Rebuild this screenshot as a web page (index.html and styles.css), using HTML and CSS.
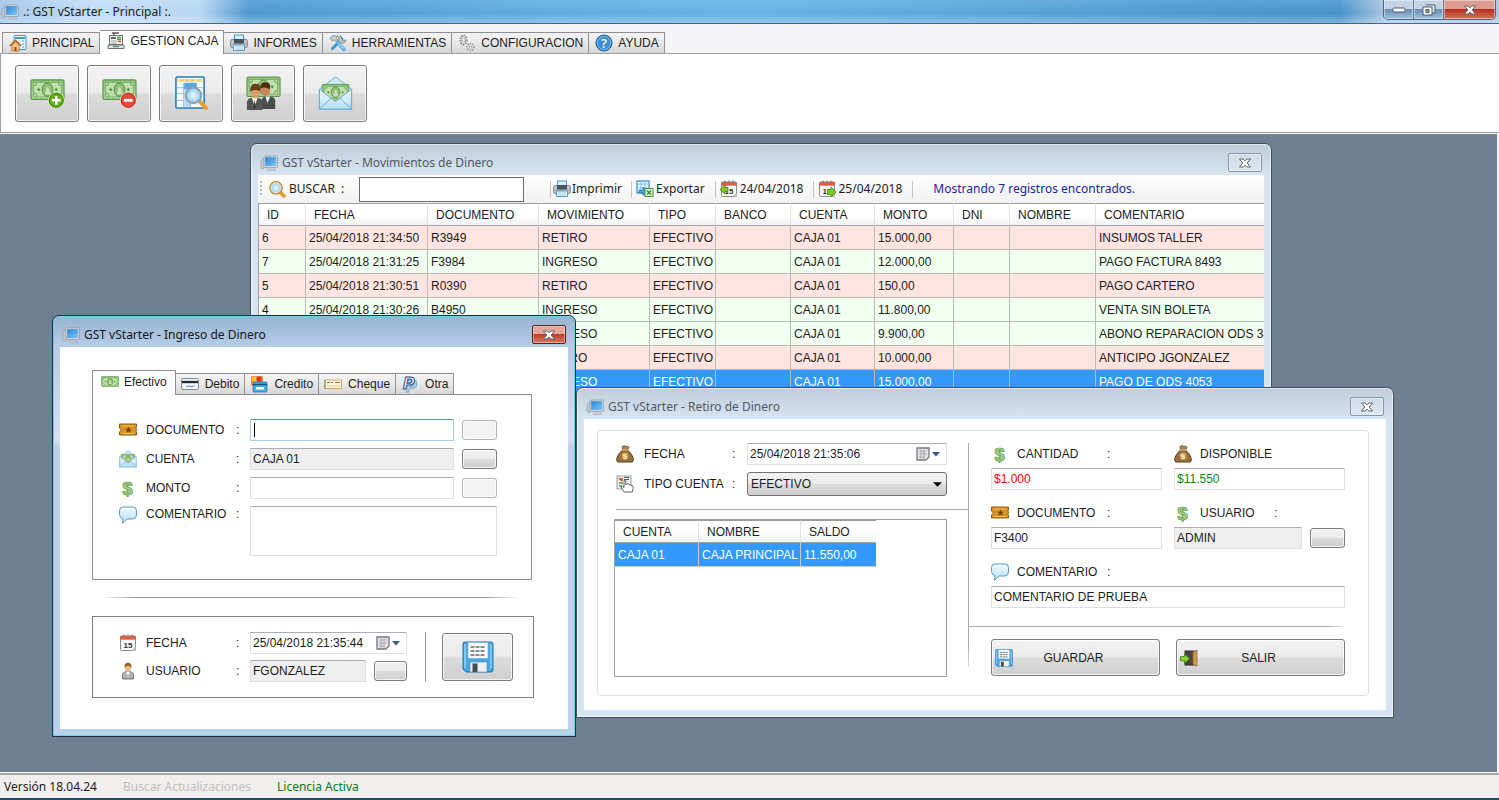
FILE: index.html
```html
<!DOCTYPE html>
<html lang="es">
<head>
<meta charset="utf-8">
<title>.: GST vStarter - Principal :.</title>
<meta name="viewport" content="width=device-width, initial-scale=1">
<link rel="stylesheet" href="styles.css">
</head>
<body>
<svg class="sprite" aria-hidden="true">
  <defs>
    <linearGradient id="g-screen" x1="0" y1="0" x2="1" y2="1"><stop offset="0" stop-color="#2b86d8"/><stop offset="1" stop-color="#7cc6f7"/></linearGradient>
    <linearGradient id="g-note" x1="0" y1="0" x2="0" y2="1"><stop offset="0" stop-color="#8fc07c"/><stop offset="1" stop-color="#b9dca6"/></linearGradient>
    <linearGradient id="g-env" x1="0" y1="0" x2="0" y2="1"><stop offset="0" stop-color="#f2faff"/><stop offset="1" stop-color="#b5ddf5"/></linearGradient>
    <radialGradient id="g-lens"><stop offset="0" stop-color="#eefaff"/><stop offset="1" stop-color="#86c7ef"/></radialGradient>
    <symbol id="i-monitor" viewBox="0 0 18 16"><path d="M1 5l3-2v10l-2 1-1-1z" fill="#c9ced3" stroke="#8c9399" stroke-width=".6"/><path d="M8 14h7l1 1.4H7z" fill="#d6dade" stroke="#9aa0a6" stroke-width=".5"/><rect x="4" y="1" width="13.500" height="11.500" rx="1" fill="#d4d8dc" stroke="#868d94" stroke-width=".6"/><rect x="5.200" y="2.200" width="11" height="8.800" fill="url(#g-screen)"/></symbol>
    <symbol id="i-home" viewBox="0 0 18 18"><rect x="5" y="1.500" width="12" height="14" rx="1" fill="#e9f6fd" stroke="#3d96d0"/><path d="M6 4h10" stroke="#3d96d0" stroke-width="2"/><path d="M13 7h2M13 10h2M13 13h2" stroke="#79bde4" stroke-width="1.500"/><path d="M3 11v6h7v-6L6.500 8z" fill="#f5c98c" stroke="#a8651e" stroke-width=".8"/><path d="M.8 12L6.500 6.500 12.200 12" fill="none" stroke="#b4641c" stroke-width="1.700"/><path d="M5.500 17v-4h2v4z" fill="#8a4b14"/></symbol>
    <symbol id="i-register" viewBox="0 0 18 18"><path d="M5 1h7M7 1v3" stroke="#555" stroke-width="1.300"/><rect x="2.500" y="3.500" width="13" height="9" fill="#f6f7f5" stroke="#6a716b"/><path d="M4 6h5" stroke="#333" stroke-width="1.500"/><path d="M10 5.500h4M10 7.500h4" stroke="#38a048" stroke-width="1.400"/><path d="M4 9h6M4 11h6" stroke="#9ba29b"/><path d="M11 9.500h3" stroke="#d33f32" stroke-width="1.300"/><path d="M1 13h16v3.500H1z" fill="#dfe4df" stroke="#69756b"/><path d="M6 14.700h6" stroke="#3d8c4c"/></symbol>
    <symbol id="i-printer" viewBox="0 0 18 18"><rect x="4.500" y="1" width="9" height="6" fill="#d4efff" stroke="#4a9bc9"/><rect x=".7" y="5.500" width="16.600" height="8" rx="1.500" fill="#c8cbce" stroke="#7d848a"/><path d="M1.500 10h15" stroke="#93999e"/><rect x="4" y="5" width="10" height="4.500" fill="#4c5259"/><path d="M3.500 11h11v5.500h-11z" fill="#f3faff" stroke="#4c9cc8"/><path d="M5 13h8M5 15h8" stroke="#9bc9e2"/></symbol>
    <symbol id="i-tools" viewBox="0 0 18 18"><path d="M3.500 14.500L13 5" stroke="#3a96d6" stroke-width="3" stroke-linecap="round"/><path d="M12 1.500a4 4 0 105 4.500l-2.800.5-1.500-1.700z" fill="#b9c0c5" stroke="#727a80" stroke-width=".7"/><path d="M1 4l3-2.500 5 .5-2 2 2 2-2 2-2-2-2 1z" fill="#c5cacd" stroke="#7a8186" stroke-width=".7"/><path d="M9.500 9.500l5.500 6" stroke="#5db4e9" stroke-width="3.600" stroke-linecap="round"/><path d="M10 9.500l4.500 5" stroke="#cdebfb"/></symbol>
    <symbol id="i-gears" viewBox="0 0 18 18"><ellipse cx="5.500" cy="6" rx="3" ry="4.500" fill="#eee" stroke="#888" stroke-width="2" stroke-dasharray="1.500 1"/><ellipse cx="5.500" cy="6" rx="1.300" ry="2.300" fill="#fff" stroke="#999" stroke-width=".7"/><circle cx="12.500" cy="13" r="3.300" fill="#eee" stroke="#999" stroke-width="2" stroke-dasharray="1.300 1.100"/><circle cx="12.500" cy="13" r="1.300" fill="#fff" stroke="#888" stroke-width=".7"/></symbol>
    <symbol id="i-help" viewBox="0 0 18 18"><circle cx="9" cy="9" r="8" fill="#3b8fce" stroke="#1c6199"/><circle cx="9" cy="9" r="6.600" fill="none" stroke="#9fd0f1" stroke-width=".7"/><text x="9" y="13.500" text-anchor="middle" font-family="Open Sans, sans-serif" font-size="13" font-weight="600" fill="#fff">?</text></symbol>
    <symbol id="i-note" viewBox="0 0 36 24"><rect x="1" y="1" width="34" height="20" rx="1.500" fill="url(#g-note)" stroke="#579747" stroke-width="1.200"/><rect x="3.500" y="3.500" width="29" height="15" fill="#bfe0ac" stroke="#79b166"/><path d="M4 7q3 0 3-3M32 7q-3 0-3-3M4 15q3 0 3 3M32 15q-3 0-3 3" fill="none" stroke="#69a356"/><ellipse cx="18" cy="11" rx="5.500" ry="7" fill="#90bd78" stroke="#58903f"/><path d="M15.500 16c0-4 1-3 1.500-5-1.500-4 3.500-4 2.500 0 0 2 2 1 2 5z" fill="#c8e2b8"/><circle cx="9" cy="11" r="1.300" fill="#4f8b3b"/><circle cx="27" cy="11" r="1.300" fill="#4f8b3b"/></symbol>
    <symbol id="i-addcash" viewBox="0 0 36 36"><use href="#i-note" width="36" height="24" y="3"/><circle cx="27" cy="25" r="8" fill="#63ad16" stroke="#d8f0bd" stroke-width="1"/><circle cx="27" cy="25" r="7.200" fill="none" stroke="#367908"/><path d="M27 20.500v9M22.500 25h9" stroke="#fff" stroke-width="2.600"/></symbol>
    <symbol id="i-subcash" viewBox="0 0 36 36"><use href="#i-note" width="36" height="24" y="3"/><circle cx="27" cy="25" r="8" fill="#e74b3d" stroke="#ffd7d0"/><circle cx="27" cy="25" r="7.200" fill="none" stroke="#b52318"/><path d="M22.500 25h9" stroke="#fff" stroke-width="2.800"/></symbol>
    <symbol id="i-search-table" viewBox="0 0 36 36"><rect x="2" y="1" width="29" height="32" rx="1" fill="#f5fbff" stroke="#207db8" stroke-width="1.600"/><path d="M3 4.500h27" stroke="#f0c75a" stroke-width="2.500"/><path d="M4 4.500h26" stroke="#fff" stroke-width="2.500" stroke-dasharray="1 5"/><path d="M3 12h27M3 18h27M3 25h27" stroke="#8fc2e5"/><path d="M10 7v25M17 7v25" stroke="#83bce0"/><rect x="10.500" y="7" width="13" height="7" fill="#5ca8de"/><rect x="10.500" y="14" width="6" height="18" fill="#b5daf2"/><path d="M26 26l7 7" stroke="#ef9f2c" stroke-width="4" stroke-linecap="round"/><circle cx="20" cy="20" r="8" fill="url(#g-lens)" stroke="#919ba3" stroke-width="1.800"/></symbol>
    <symbol id="i-people" viewBox="0 0 36 36"><use href="#i-note" width="36" height="24"/><path d="M16 34V25q0-4 7-4t7 4v9z" fill="#4b4b4d"/><path d="M20 21l2 7 3-7z" fill="#eee"/><ellipse cx="20" cy="14" rx="5" ry="6.500" fill="#c88656"/><path d="M14.500 13q0-7 6-6.500 6 .5 4 7-5-3-10-.5z" fill="#523015"/><path d="M1 35v-8q0-5 8-5t8 5v8z" fill="#555558"/><path d="M6 22l3 9 3-9z" fill="#fff"/><path d="M9 24l1 8-1 2-1-2z" fill="#333"/><ellipse cx="9.500" cy="16.500" rx="4.500" ry="6.500" fill="#d99c6e"/><path d="M4.500 16q-1-8 5.500-8 6 0 4.500 8-4-3-10 0z" fill="#6a3e1a"/></symbol>
    <symbol id="i-envelope" viewBox="0 0 36 37"><path d="M1 14L18 1l17 13v21H1z" fill="#cdeafb" stroke="#64acd5"/><use href="#i-note" width="30" height="20" x="3" y="8"/><path d="M1 14l17 13 17-13v21H1z" fill="url(#g-env)" stroke="#64acd5"/><path d="M1 35l13-12M35 35L22 23" fill="none" stroke="#64acd5"/></symbol>
    <symbol id="i-search" viewBox="0 0 18 18"><path d="M12 12l4 4" stroke="#e9982b" stroke-width="3.500" stroke-linecap="round"/><circle cx="8" cy="7.800" r="6" fill="url(#g-lens)" stroke="#c09139" stroke-width="1.800"/><circle cx="8" cy="7.800" r="5" fill="none" stroke="#fff" stroke-width=".7"/></symbol>
    <symbol id="i-export" viewBox="0 0 18 18"><rect x="1" y="1" width="12" height="12" fill="#eefaff" stroke="#3388be" stroke-width="1.200"/><path d="M1 4h12M1 8h12M5 1v12M9 1v12" stroke="#80bddf"/><path d="M3 10h4V7l5 4.500-5 4V13H3z" fill="#37a1e3" stroke="#1a6ca7" stroke-width=".6"/><rect x="9" y="8.500" width="8" height="8" fill="#e6f4dd" stroke="#3f953c"/><path d="M11 10.500l4 4M15 10.500l-4 4" stroke="#2f8f2f" stroke-width="1.500"/></symbol>
    <symbol id="i-cal" viewBox="0 0 18 18"><rect x="1.500" y="2" width="15" height="14.500" rx="1" fill="#fafafa" stroke="#888"/><rect x="1.500" y="2" width="15" height="3.700" fill="#e75b43"/><path d="M5 .5v3M9 .5v3M13 .5v3" stroke="#777" stroke-width="1.200"/><text x="9" y="13.500" text-anchor="middle" font-family="Liberation Sans, sans-serif" font-size="8" font-weight="700" fill="#333">15</text><path d="M12 16.500l4.500-4v4z" fill="#c8c8c8"/></symbol>
    <symbol id="i-calprev" viewBox="0 0 18 18"><use href="#i-cal" width="18" height="18"/><path d="M0 9.500L5 5v2.500h3v4H5V14z" fill="#82c91e" stroke="#3f8108" stroke-width=".8"/></symbol>
    <symbol id="i-calnext" viewBox="0 0 18 18"><use href="#i-cal" width="18" height="18"/><path d="M18 12l-5-5v2.500H9.500v5H13V17z" fill="#82c91e" stroke="#3f8108" stroke-width=".8"/></symbol>
    <symbol id="i-card" viewBox="0 0 18 18"><rect x=".6" y="3.500" width="16.800" height="11" rx="1.200" fill="#f8f9fb" stroke="#80868e"/><path d="M1 7h16" stroke="#292c32" stroke-width="2.400"/><path d="M5 11.500l3-.5 2 .5 4-.5" fill="none" stroke="#5b7fc5"/></symbol>
    <symbol id="i-credit" viewBox="0 0 18 18"><rect x="1" y="1" width="12" height="10" rx="1" fill="#ef8a45"/><circle cx="4.500" cy="4" r="2.600" fill="#ffc72b"/><circle cx="9" cy="4" r="2.600" fill="#d93025"/><rect x="3" y="7" width="14" height="10" rx="1" fill="#48aee8" stroke="#146099" stroke-width=".6"/><path d="M3 9.500h14" stroke="#14568f" stroke-width="1.500"/><rect x="6" y="12" width="8" height="2.500" fill="#fff"/></symbol>
    <symbol id="i-cheque" viewBox="0 0 18 18"><rect x=".6" y="5" width="16.800" height="8.500" fill="#fff9dc" stroke="#d6a568"/><path d="M1 5v9" stroke="#79a879" stroke-width="1.400"/><path d="M3 7.500h3M7 7.500h2M11 7.500h5" stroke="#777"/><path d="M3 11h13" stroke="#e0b7a0"/></symbol>
    <symbol id="i-paypal" viewBox="0 0 18 18"><text x="5" y="16.500" font-family="Liberation Sans, sans-serif" font-size="16" font-weight="700" font-style="italic" fill="#cfe0f1" stroke="#7ba6d2">P</text><text x="2" y="14" font-family="Liberation Sans, sans-serif" font-size="17" font-weight="700" font-style="italic" fill="#fff" stroke="#234a8c">P</text></symbol>
    <symbol id="i-ticket" viewBox="0 0 18 18"><path d="M.5 3h17v3l-1 1 1 1v1l-1 1 1 1v3H.5v-3l2-2-2-2z" fill="#d99322" stroke="#8e5a0c"/><path d="M3 5h12M3 12.500h12" stroke="#f0bd5c"/><path d="M9.500 5.500l1 2.300h2.400l-1.900 1.500.7 2.500-2.200-1.400-2.200 1.400.7-2.500-1.900-1.500h2.400z" fill="#6f460a"/></symbol>
    <symbol id="i-dollar" viewBox="0 0 18 18"><text x="8.500" y="15.500" text-anchor="middle" font-family="Liberation Sans, sans-serif" font-size="19" font-weight="700" fill="#a4d385" stroke="#5c9c45" stroke-width=".7">$</text></symbol>
    <symbol id="i-bubble" viewBox="0 0 18 18"><path d="M4 1h10q3.500 0 3.500 3.500v4.500q0 4-4 4H8l-4.500 4.500 .5-5Q.5 12 .5 8.500V4.500Q.5 1 4 1z" fill="url(#g-env)" stroke="#5b9ac9"/></symbol>
    <symbol id="i-user" viewBox="0 0 18 18"><path d="M3.500 17v-4q0-3.500 5.500-3.500t5.500 3.500v4z" fill="#aeb0b2" stroke="#737679"/><path d="M7 10l2 3.500 2-3.500z" fill="#fff"/><ellipse cx="9" cy="6" rx="3" ry="4" fill="#ebb98c"/><path d="M5.500 6Q5 .8 9 .8T12.500 6Q11 3.500 9 4 7 3.500 5.500 6z" fill="#9b642c"/></symbol>
    <symbol id="i-floppy" viewBox="0 0 32 32"><path d="M1 3q0-2 2-2h26q2 0 2 2v26q0 2-2 2H4l-3-3z" fill="#47a8e5" stroke="#1c73ae"/><path d="M3 3v24M29 3v24" stroke="#93d2f6" stroke-width="1.500"/><rect x="6" y="1.500" width="20" height="16" fill="#fbfdff" stroke="#79a9c9" stroke-width=".7"/><path d="M8.500 6h15M8.500 10h15M8.500 14h15" stroke="#666" stroke-width="1.600" stroke-dasharray="4 1"/><rect x="8" y="21" width="17" height="10" fill="#eef2f6" stroke="#6b91ad" stroke-width=".7"/><rect x="10.500" y="22.500" width="5" height="8.500" fill="#454b55"/></symbol>
    <symbol id="i-bag" viewBox="0 0 18 18"><path d="M6.500 5h5q5 4 6 9.500l-1 2.500h-15L.5 14.500Q1.500 9 6.500 5z" fill="#9a7041" stroke="#5d3e1a"/><path d="M6 1.500l2.500-1 1 1 2-.5 1.500 1.500L11.500 5h-5z" fill="#ad824d" stroke="#5d3e1a" stroke-width=".7"/><path d="M6 5h6" stroke="#e0be78" stroke-width="1.300"/><circle cx="9" cy="11" r="3.400" fill="#c69b55"/><text x="9" y="14" text-anchor="middle" font-family="Liberation Sans, sans-serif" font-size="8" font-weight="700" fill="#fff1bd">$</text></symbol>
    <symbol id="i-click" viewBox="0 0 18 18"><rect x="1" y="1" width="14" height="13" fill="#f1f1ee" stroke="#9b9b98"/><path d="M3 3l3 3M6 3v3" stroke="#d73b2c" stroke-width="1.500"/><path d="M3 8h4M3 11h3" stroke="#4b9c46" stroke-width="1.400"/><path d="M8 2.500h5M8 4.500h5" stroke="#4b5b6b"/><path d="M8 17l-3-5 1.500-.7L8 12.500V5.700h1.700V10L11 8.700h1.400l.5 1 1.400-.2.700 1.200 1.500 0 .8 1.300-.8 5z" fill="#fff" stroke="#555" stroke-width=".9"/></symbol>
    <symbol id="i-exit" viewBox="0 0 18 18"><rect x="5" y="2" width="9" height="14" fill="#4a4740" stroke="#2d2b27"/><path d="M13 3l4-2v16l-4-1.500z" fill="#d09751" stroke="#90602a" stroke-width=".7"/><path d="M.5 7.500h4V5l5 4.700-5 4.600v-2.500h-4z" fill="#8bd42c" stroke="#437f0c" stroke-width=".8"/></symbol>
    <symbol id="i-drop" viewBox="0 0 24 14"><path d="M1 1h12v9l-3 3H1z" fill="#e6e6e8" stroke="#77777c" stroke-width="1.300"/><path d="M3 4h8M3 7h8M3 10h6M5 3v9M8 3v9" stroke="#a0a0a8" stroke-width=".8"/><path d="M16 5h8l-4 4.500z" fill="#34587f"/></symbol>
    <symbol id="i-arrow" viewBox="0 0 10 5"><path d="M0 0h10L5 5z" fill="#000"/></symbol>
    <symbol id="i-x" viewBox="0 0 14 10"><path d="M1.500 1h3.700L7 2.900 8.800 1h3.700L9.200 5l3.300 4H8.800L7 7.100 5.200 9H1.500l3.300-4z" fill="#fff" stroke="#5b6470"/></symbol>
  </defs>
</svg>

<div class="app">
  <header class="titlebar">
    <svg class="ic"><use href="#i-monitor"/></svg>
    <h1 class="titlebar-text">.: GST vStarter - Principal :.</h1>
    <div class="win-controls">
      <button class="ctl" aria-label="Minimizar"><svg width="14" height="8" viewBox="0 0 14 8"><rect x="1" y="2" width="12" height="4" rx="1" fill="#fff" stroke="#4c5a70"/></svg></button>
      <button class="ctl" aria-label="Restaurar"><svg width="14" height="12" viewBox="0 0 14 12"><path d="M4 1h9v8h-3" fill="#dfe7ef" stroke="#4c5a70"/><rect x="1" y="3" width="9" height="8" fill="#fff" stroke="#4c5a70"/><rect x="4" y="5.500" width="3" height="3" fill="#8aa" stroke="#4c5a70"/></svg></button>
      <button class="ctl ctl-close" aria-label="Cerrar"><svg width="14" height="10"><use href="#i-x"/></svg></button>
    </div>
  </header>

  <nav class="main-tabs" role="tablist">
    <button class="main-tab" role="tab"><svg class="ic"><use href="#i-home"/></svg>PRINCIPAL</button>
    <button class="main-tab is-active" role="tab" aria-selected="true"><svg class="ic"><use href="#i-register"/></svg>GESTION CAJA</button>
    <button class="main-tab" role="tab"><svg class="ic"><use href="#i-printer"/></svg>INFORMES</button>
    <button class="main-tab" role="tab"><svg class="ic"><use href="#i-tools"/></svg>HERRAMIENTAS</button>
    <button class="main-tab" role="tab"><svg class="ic"><use href="#i-gears"/></svg>CONFIGURACION</button>
    <button class="main-tab" role="tab"><svg class="ic"><use href="#i-help"/></svg>AYUDA</button>
  </nav>

  <div class="ribbon">
    <button class="btn ribbon-btn" aria-label="Ingreso de dinero"><svg class="ic-lg"><use href="#i-addcash"/></svg></button>
    <button class="btn ribbon-btn" aria-label="Retiro de dinero"><svg class="ic-lg"><use href="#i-subcash"/></svg></button>
    <button class="btn ribbon-btn" aria-label="Movimientos"><svg class="ic-lg"><use href="#i-search-table"/></svg></button>
    <button class="btn ribbon-btn" aria-label="Usuarios de caja"><svg class="ic-lg"><use href="#i-people"/></svg></button>
    <button class="btn ribbon-btn" aria-label="Cuentas"><svg class="ic-lg"><use href="#i-envelope"/></svg></button>
  </div>

  <main class="desktop">
    <section class="window win-mov">
      <header class="window-head">
        <svg class="ic"><use href="#i-monitor"/></svg><h2 class="window-title">GST vStarter - Movimientos de Dinero</h2>
        <button class="close" aria-label="Cerrar"><svg width="14" height="10"><use href="#i-x"/></svg></button>
      </header>
      <div class="window-body">
        <div class="toolbar">
          <span class="grip"></span>
          <label class="tool tool-search" for="buscar"><svg class="ic"><use href="#i-search"/></svg>BUSCAR&nbsp; :</label>
          <input class="search" id="buscar" type="text">
          <button class="tool"><svg class="ic"><use href="#i-printer"/></svg>Imprimir</button>
          <button class="tool"><svg class="ic"><use href="#i-export"/></svg>Exportar</button>
          <button class="tool"><svg class="ic"><use href="#i-calprev"/></svg>24/04/2018</button>
          <button class="tool"><svg class="ic"><use href="#i-calnext"/></svg>25/04/2018</button>
          <span class="tool tool-status">Mostrando 7 registros encontrados.</span>
        </div>
        <table class="grid mov-grid">
          <colgroup><col class="c-id"><col class="c-fecha"><col class="c-doc"><col class="c-doc"><col class="c-tipo"><col class="c-banco"><col class="c-cuenta"><col class="c-monto"><col class="c-dni"><col class="c-nombre"><col></colgroup>
          <thead><tr><th>ID</th><th>FECHA</th><th>DOCUMENTO</th><th>MOVIMIENTO</th><th>TIPO</th><th>BANCO</th><th>CUENTA</th><th>MONTO</th><th>DNI</th><th>NOMBRE</th><th>COMENTARIO</th></tr></thead>
          <tbody>
            <tr class="out"><td>6</td><td>25/04/2018 21:34:50</td><td>R3949</td><td>RETIRO</td><td>EFECTIVO</td><td></td><td>CAJA 01</td><td>15.000,00</td><td></td><td></td><td>INSUMOS TALLER</td></tr>
            <tr class="in"><td>7</td><td>25/04/2018 21:31:25</td><td>F3984</td><td>INGRESO</td><td>EFECTIVO</td><td></td><td>CAJA 01</td><td>12.000,00</td><td></td><td></td><td>PAGO FACTURA 8493</td></tr>
            <tr class="out"><td>5</td><td>25/04/2018 21:30:51</td><td>R0390</td><td>RETIRO</td><td>EFECTIVO</td><td></td><td>CAJA 01</td><td>150,00</td><td></td><td></td><td>PAGO CARTERO</td></tr>
            <tr class="in"><td>4</td><td>25/04/2018 21:30:26</td><td>B4950</td><td>INGRESO</td><td>EFECTIVO</td><td></td><td>CAJA 01</td><td>11.800,00</td><td></td><td></td><td>VENTA SIN BOLETA</td></tr>
            <tr class="in"><td></td><td></td><td></td><td>INGRESO</td><td>EFECTIVO</td><td></td><td>CAJA 01</td><td>9.900,00</td><td></td><td></td><td>ABONO REPARACION ODS 34</td></tr>
            <tr class="out"><td></td><td></td><td></td><td>RETIRO</td><td>EFECTIVO</td><td></td><td>CAJA 01</td><td>10.000,00</td><td></td><td></td><td>ANTICIPO JGONZALEZ</td></tr>
            <tr class="sel"><td></td><td></td><td></td><td>INGRESO</td><td>EFECTIVO</td><td></td><td>CAJA 01</td><td>15.000,00</td><td></td><td></td><td>PAGO DE ODS 4053</td></tr>
          </tbody>
        </table>
      </div>
    </section>

    <section class="window win-ret">
      <header class="window-head">
        <svg class="ic"><use href="#i-monitor"/></svg><h2 class="window-title">GST vStarter - Retiro de Dinero</h2>
        <button class="close" aria-label="Cerrar"><svg width="14" height="10"><use href="#i-x"/></svg></button>
      </header>
      <div class="window-body ret-body">
        <div class="group">
          <div class="ret-left">
            <div class="ret-form">
              <svg class="ic"><use href="#i-bag"/></svg><label for="r-fecha">FECHA</label><span>:</span>
              <div class="datebox"><input id="r-fecha" type="text" value="25/04/2018 21:35:06"><button class="drop" aria-label="Abrir calendario"><svg width="24" height="14"><use href="#i-drop"/></svg></button></div>
              <svg class="ic"><use href="#i-click"/></svg><label for="r-tipo">TIPO CUENTA</label><span>:</span>
              <div class="combo-wrap"><select class="combo" id="r-tipo"><option>EFECTIVO</option></select><svg class="combo-arrow"><use href="#i-arrow"/></svg></div>
            </div>
            <hr class="rule">
            <div class="listbox">
              <table class="grid acc-grid">
                <colgroup><col class="a-cuenta"><col class="a-nombre"><col class="a-saldo"></colgroup>
                <thead><tr><th>CUENTA</th><th>NOMBRE</th><th>SALDO</th></tr></thead>
                <tbody><tr class="sel"><td>CAJA 01</td><td>CAJA PRINCIPAL</td><td>11.550,00</td></tr></tbody>
              </table>
            </div>
          </div>
          <div class="vrule"></div>
          <div class="ret-right">
            <div class="ret-fields">
              <div class="field"><label class="cap" for="r-cant"><svg class="ic"><use href="#i-dollar"/></svg><span class="cap-text">CANTIDAD</span>:</label><input class="txt red" id="r-cant" type="text" value="$1.000"></div>
              <div class="field"><label class="cap" for="r-disp"><svg class="ic"><use href="#i-bag"/></svg>DISPONIBLE</label><input class="txt green" id="r-disp" type="text" value="$11.550"></div>
              <div class="field"><label class="cap" for="r-doc"><svg class="ic"><use href="#i-ticket"/></svg><span class="cap-text">DOCUMENTO</span>:</label><input class="txt" id="r-doc" type="text" value="F3400"></div>
              <div class="field"><label class="cap cap-user" for="r-usr"><svg class="ic"><use href="#i-dollar"/></svg><span class="cap-text">USUARIO</span>:</label><div class="with-btn"><input class="txt" id="r-usr" type="text" value="ADMIN" readonly><button class="btn mini" aria-label="Elegir usuario"></button></div></div>
              <div class="field wide"><label class="cap" for="r-com"><svg class="ic"><use href="#i-bubble"/></svg><span class="cap-text">COMENTARIO</span>:</label><input class="txt" id="r-com" type="text" value="COMENTARIO DE PRUEBA"></div>
            </div>
            <hr class="rule rule-right">
            <div class="ret-actions">
              <button class="btn action"><svg class="ic"><use href="#i-floppy"/></svg><span>GUARDAR</span></button>
              <button class="btn action"><svg class="ic"><use href="#i-exit"/></svg><span>SALIR</span></button>
            </div>
          </div>
        </div>
      </div>
    </section>

    <section class="window is-front win-ing">
      <header class="window-head">
        <svg class="ic"><use href="#i-monitor"/></svg><h2 class="window-title">GST vStarter - Ingreso de Dinero</h2>
        <button class="close close-red" aria-label="Cerrar"><svg width="14" height="10"><use href="#i-x"/></svg></button>
      </header>
      <div class="window-body ing-body">
        <div class="pay-tabs" role="tablist">
          <button class="pay-tab is-active" role="tab" aria-selected="true"><svg class="ic"><use href="#i-note"/></svg>Efectivo</button>
          <button class="pay-tab" role="tab"><svg class="ic"><use href="#i-card"/></svg>Debito</button>
          <button class="pay-tab" role="tab"><svg class="ic"><use href="#i-credit"/></svg>Credito</button>
          <button class="pay-tab" role="tab"><svg class="ic"><use href="#i-cheque"/></svg>Cheque</button>
          <button class="pay-tab" role="tab"><svg class="ic"><use href="#i-paypal"/></svg>Otra</button>
        </div>
        <div class="pay-panel">
          <svg class="ic"><use href="#i-ticket"/></svg><label for="i-doc">DOCUMENTO</label><span>:</span><div class="txt focus"><span class="caret"></span><input id="i-doc" type="text"></div><button class="btn mini" disabled aria-label="Buscar documento"></button>
          <svg class="ic"><use href="#i-envelope"/></svg><label for="i-cta">CUENTA</label><span>:</span><input class="txt" id="i-cta" type="text" value="CAJA 01" readonly><button class="btn mini" aria-label="Elegir cuenta"></button>
          <svg class="ic"><use href="#i-dollar"/></svg><label for="i-monto">MONTO</label><span>:</span><input class="txt" id="i-monto" type="text"><button class="btn mini" disabled aria-label="Calcular monto"></button>
          <svg class="ic top"><use href="#i-bubble"/></svg><label class="top" for="i-com">COMENTARIO</label><span class="top">:</span><textarea class="txt area" id="i-com"></textarea>
        </div>
        <hr class="rule rule-fade">
        <div class="foot-panel">
          <div class="foot-form">
            <svg class="ic"><use href="#i-cal"/></svg><label for="i-fecha">FECHA</label><span>:</span>
            <div class="datebox"><input id="i-fecha" type="text" value="25/04/2018 21:35:44"><button class="drop" aria-label="Abrir calendario"><svg width="24" height="14"><use href="#i-drop"/></svg></button></div>
            <svg class="ic"><use href="#i-user"/></svg><label for="i-usr">USUARIO</label><span>:</span>
            <div class="with-btn"><input class="txt" id="i-usr" type="text" value="FGONZALEZ" readonly><button class="btn mini" aria-label="Elegir usuario"></button></div>
          </div>
          <button class="btn save" aria-label="Guardar"><svg class="ic-md"><use href="#i-floppy"/></svg></button>
        </div>
      </div>
    </section>
  </main>

  <footer class="statusbar">
    <span>Versión 18.04.24</span><span class="muted">Buscar Actualizaciones</span><span class="ok">Licencia Activa</span>
  </footer>
</div>
</body>
</html>
```
FILE: styles.css
```css
* { box-sizing: border-box; }
body { margin: 0; font: 12px/16px "Liberation Sans", Arial, sans-serif; color: #1c1c1c; }
button, input, select, textarea { font: inherit; color: inherit; margin: 0; }
button { padding: 0; }
.sprite { position: absolute; width: 0; height: 0; }
.ic { width: 18px; height: 18px; flex: none; }
.ic-md { width: 32px; height: 32px; flex: none; }
.ic-lg { width: 35px; height: 35px; flex: none; }

.app { display: flex; flex-direction: column; height: 100vh; background: #f5f5f5; border-bottom: 2px solid #27485c; overflow: hidden; }

/* Main title bar */
.titlebar {
  display: flex; align-items: center; gap: 4px; height: 24px; flex: none; padding-left: 1px;
  border-bottom: 1px solid #3d6789;
  background:
    linear-gradient(rgba(255,255,255,.12), rgba(255,255,255,0) 60%, rgba(255,255,255,.3)),
    linear-gradient(90deg, #a3c6e8 0, #c3dcf5 90px, #b9d6f2 200px, #4c98d1 250px, #5eade2 560px, #64b4e6 750px, #4b98d0 1200px, #4793cd 1340px, #a9c5e0 1385px);
}
.titlebar-text, .window-title { margin: 0; font: 12px/16px "Noto Sans", "Open Sans", sans-serif; }
.win-controls { display: flex; align-self: flex-start; margin: 0 3px 0 auto; border: 1px solid #4e6480; border-top: 0; border-radius: 0 0 5px 5px; overflow: hidden; }
.ctl { display: flex; align-items: center; justify-content: center; width: 30px; height: 19px; border: 0; border-right: 1px solid #5d7592; background: linear-gradient(#c3d4e6 0 45%, #6c8fb5 50%, #9fc0dc); box-shadow: inset 0 0 0 1px rgba(255,255,255,.45); }
.ctl-close { width: 51px; border-right: 0; background: linear-gradient(#dd9c90 0 45%, #b93120 50%, #d9715a); }

/* Section tabs */
.main-tabs { display: flex; align-items: flex-end; height: 30px; flex: none; padding-left: 2px; border-bottom: 1px solid #a0a0a0; background: #f5f4f6; }
.main-tab { display: flex; align-items: center; gap: 5px; height: 21px; padding: 0 5px 0 6px; border: 1px solid #8e8f95; border-left-width: 0; border-bottom: 0; background: linear-gradient(#f3f3f3, #e9e9e9 50%, #d6d6d8); white-space: nowrap; }
.main-tab:first-child { border-left-width: 1px; }
.main-tab.is-active { height: 24px; margin-bottom: -1px; padding: 0 5px 3px 7px; background: #fff; }

.ribbon { display: flex; gap: 8px; height: 79px; flex: none; padding: 11px 14px; background: #fff; border-left: 1px solid #a0a0a0; border-bottom: 1px solid #a0a0a0; }
.btn { display: flex; align-items: center; justify-content: center; border: 1px solid #7c7c7c; border-radius: 3px; background: linear-gradient(#f2f2f2, #ebebeb 48%, #dcdcdc 52%, #cfcfcf); box-shadow: inset 0 0 0 1px rgba(255,255,255,.7); }
.btn:disabled { border-color: #b5b5b5; background: #f4f4f4; }
.ribbon-btn { width: 64px; height: 57px; }

/* MDI area */
.desktop { position: relative; flex: 1; margin: 1px 2px 0 0; background: #708093; border-top: 1px solid #808080; overflow: hidden; }
.window { position: absolute; padding: 0 7px 7px; border: 1px solid #43505e; border-radius: 7px 7px 0 0; background: linear-gradient(#c0cedb, #d7e4f1 31px); box-shadow: inset 0 0 0 1px rgba(255,255,255,.55); }
.window.is-front { border-color: #17303f; background: linear-gradient(#98b3d0, #b6cde6 31px, #d2e1f2 125px, #b9d1ea 131px); box-shadow: inset 0 0 0 1px #6fd3e8; }
.window-head { display: flex; align-items: center; gap: 4px; height: 31px; padding: 6px 2px 0 2px; color: #4f5a66; }
.is-front .window-head { color: #101820; }
.close { display: flex; align-items: center; justify-content: center; width: 34px; height: 19px; margin-left: auto; border: 1px solid #8496ab; border-radius: 2px; background: rgba(255,255,255,.18); box-shadow: inset 0 0 0 1px rgba(255,255,255,.4); }
.close-red { border-color: #5c2020; background: linear-gradient(#e2a79c 0 45%, #c2402c 50%, #d5755f); }
.window-body { background: #fff; }
.win-mov { left: 250px; top: 8px; width: 1022px; }
.win-ret { left: 576px; top: 252px; width: 818px; }
.win-ing { left: 52px; top: 180px; width: 524px; }

/* Movements window */
.toolbar { display: flex; align-items: center; height: 28px; background: linear-gradient(#fdfdfd, #f2f2f2); font: 12px/16px "Noto Sans", "Open Sans", sans-serif; }
.grip { width: 2px; height: 16px; margin: 0 6px 0 2px; background: repeating-linear-gradient(#bbb 0 2px, transparent 2px 4px); }
.tool { display: flex; align-items: center; gap: 2px; height: 17px; padding: 0 10px 0 4px; border: 0; border-right: 1px solid #c2c5ca; background: none; white-space: nowrap; }
.tool-search { gap: 3px; width: 91px; padding: 0; border: 0; }
.search { width: 165px; height: 25px; margin-right: 26px; border: 1px solid #6b6b6b; background: #fff; }
.search + .tool { gap: 1px; padding: 0 9px 0 2px; border-left: 1px solid #c2c5ca; }
.tool-status { padding: 0 0 0 20px; border: 0; color: #1c1ca0; }
.grid { width: 100%; table-layout: fixed; border-collapse: separate; border-spacing: 0; }
.grid th { height: 23px; padding: 0 8px; font-weight: 400; text-align: left; border-top: 1px solid #9b9b9b; border-bottom: 1px solid #a6a6a6; border-right: 1px solid #e0e3e8; background: linear-gradient(#fff 50%, #f2f3f5); }
.grid td { height: 24px; padding: 0 0 0 3px; white-space: nowrap; overflow: hidden; border-right: 1px solid #b9b9b9; border-bottom: 1px solid #b9b9b9; }
.grid th:last-child, .grid td:last-child { border-right: 0; }
.mov-grid { border-left: 1px solid #a0a0a0; }
.out td { background: #ffe4e1; }
.in td { background: #f0fff0; }
.sel td { background: #3399ff; color: #fff; }
.c-id { width: 47px; } .c-fecha { width: 122px; } .c-doc { width: 111px; } .c-tipo { width: 66px; } .c-banco { width: 75px; }
.c-cuenta { width: 84px; } .c-monto { width: 79px; } .c-dni { width: 56px; } .c-nombre { width: 86px; }

/* Shared fields */
.txt, .datebox { width: 100%; height: 22px; padding: 0 2px; border: 1px solid #dcdfe6; border-top-color: #abadb3; border-radius: 1px; background: #fff; }
.txt:read-only:is(input) { background: #efefef; }
.txt.focus { display: flex; align-items: center; border-color: #a5cbe8; border-top-color: #5b93c0; }
.txt.focus input, .datebox input { flex: 1; min-width: 0; padding: 0; border: 0; outline: 0; background: none; }
.caret { width: 1px; height: 14px; margin-left: 1px; background: #000; }
.datebox { display: flex; align-items: center; }
.drop { display: flex; width: 24px; height: 14px; margin-right: 4px; border: 0; background: none; }
.mini { width: 35px; height: 20px; }
.with-btn { display: flex; align-items: center; gap: 8px; }
.with-btn .txt { flex: 1; min-width: 0; }
.with-btn .mini { flex: none; }
.red { color: #f00; }
.green { color: #0a8a0a; }
.rule { width: 100%; height: 1px; margin: 0; border: 0; background: #a8a8a8; }

/* Withdrawal window */
.ret-body { padding: 11px 17px 14px 13px; }
.group { display: flex; min-height: 265px; padding: 12px 23px 18px 16px; border: 1px solid #d9e2ea; border-radius: 4px; }
.ret-left { width: 354px; }
.ret-form { display: grid; grid-template-columns: 28px 88px 15px 200px; row-gap: 7px; align-items: center; padding-left: 2px; }
.combo-wrap { position: relative; display: flex; }
.combo { flex: 1; height: 24px; padding: 0 18px 0 3px; border: 1px solid #707070; border-radius: 3px; appearance: none; background: linear-gradient(#f2f2f2, #ebebeb 48%, #dcdcdc 52%, #cfcfcf); }
.combo-arrow { position: absolute; right: 5px; top: 10px; width: 9px; height: 5px; pointer-events: none; }
.ret-left .rule { margin: 13px 0 9px 2px; width: auto; }
.listbox { width: 333px; height: 158px; border: 1px solid #a0a0a0; }
.acc-grid { width: 261px; }
.acc-grid td { border-color: #c8c8c8; }
.a-cuenta { width: 84px; } .a-nombre { width: 102px; } .a-saldo { width: 75px; }
.vrule { width: 1px; height: 224px; background: linear-gradient(#aaa 90%, #ddd); }
.ret-right { flex: 1; min-width: 0; }
.ret-fields { display: grid; grid-template-columns: 1fr 1fr; gap: 12px; padding-left: 22px; }
.field { display: grid; gap: 3px; }
.wide { grid-column: 1 / -1; }
.cap { display: flex; align-items: center; height: 22px; gap: 8px; }
.cap-text { width: 82px; }
.cap-user .cap-text { width: 66px; }
.rule-right { margin: 18px 0 12px; background: linear-gradient(90deg, #aaa 95%, #eee); }
.ret-actions { display: grid; grid-template-columns: 1fr 1fr; gap: 16px; padding-left: 22px; }
.action { height: 37px; padding: 0 3px; }
.action span { flex: 1; padding-right: 22px; text-align: center; }

/* Deposit window */
.ing-body { padding: 23px 34px 31px 32px; }
.pay-tabs { display: flex; align-items: flex-end; height: 24px; }
.pay-tab { display: flex; align-items: center; gap: 6px; height: 21px; padding: 0 5px; border: 1px solid #8e8f95; border-left: 0; border-bottom: 0; background: linear-gradient(#f3f3f3, #e9e9e9 50%, #d6d6d8); }
.pay-tab.is-active { position: relative; height: 25px; margin-bottom: -1px; padding: 0 8px 2px; gap: 5px; border-left: 1px solid #8e8f95; background: #fff; }
.pay-panel { display: grid; grid-template-columns: 27px 90px 14px 1fr 35px; row-gap: 7px; align-items: center; margin-right: 2px; padding: 24px 34px 23px 26px; border: 1px solid #8e8f95; }
.pay-panel .txt { width: calc(100% - 8px); }
.pay-panel .area { grid-column: 4 / -1; display: block; width: 100%; height: 50px; resize: none; }
.pay-panel .top { align-self: start; }
.rule-fade { width: auto; margin: 17px 15px 18px 10px; background: linear-gradient(90deg, transparent, #999 8%, #999 92%, transparent); }
.foot-panel { display: flex; align-items: center; justify-content: space-between; padding: 15px 20px 15px 26px; border: 1px solid #808080; }
.foot-form { display: grid; grid-template-columns: 27px 90px 14px 157px; row-gap: 6px; align-items: center; padding-right: 18px; border-right: 1px solid #999; }
.foot-form .mini { width: 33px; }
.save { width: 71px; height: 48px; }

.statusbar { display: flex; align-items: center; gap: 26px; height: 25px; flex: none; margin-top: 1px; padding-left: 4px; border-top: 2px solid #a7a7a7; background: #f1eeee; font: 12px/16px "Noto Sans", "Open Sans", sans-serif; }
.muted { color: #c2c0c0; }
.ok { color: #0d7a17; }
```
